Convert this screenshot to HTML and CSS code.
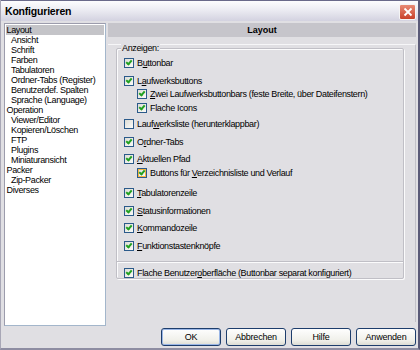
FILE: index.html
```html
<!DOCTYPE html>
<html>
<head>
<meta charset="utf-8">
<link rel="stylesheet" href="styles.css">
</head>
<body>
<div class="window">
  <div class="titlebar">
    <span class="title">Konfigurieren</span>
    <span class="close"><svg width="10" height="10" viewBox="0 0 10 10"><path d="M1.5 1.5 L8.5 8.5 M8.5 1.5 L1.5 8.5" stroke="#fff" stroke-width="1.8"/></svg></span>
  </div>
  <div class="main">
    <ul class="tree">
      <li class="sel">Layout</li>
      <li class="sub">Ansicht</li>
      <li class="sub">Schrift</li>
      <li class="sub">Farben</li>
      <li class="sub">Tabulatoren</li>
      <li class="sub">Ordner-Tabs (Register)</li>
      <li class="sub">Benutzerdef. Spalten</li>
      <li class="sub">Sprache (Language)</li>
      <li>Operation</li>
      <li class="sub">Viewer/Editor</li>
      <li class="sub">Kopieren/Löschen</li>
      <li class="sub">FTP</li>
      <li class="sub">Plugins</li>
      <li class="sub">Miniaturansicht</li>
      <li>Packer</li>
      <li class="sub">Zip-Packer</li>
      <li>Diverses</li>
    </ul>
    <div class="right">
      <div class="header">Layout</div>
      <div class="panel">
        <div class="group">
          <span class="legend">Anzeigen:</span>
          <div class="row r1"><span class="cb on"></span><span>B<u>u</u>ttonbar</span></div>
          <div class="row top"><span class="cb on"></span><span>L<u>a</u>ufwerksbuttons</span></div>
          <div class="row nest"><span class="cb on"></span><span><u>Z</u>wei Laufwerksbuttonbars (feste Breite, über Dateifenstern)</span></div>
          <div class="row nest"><span class="cb on"></span><span>Flache Icons</span></div>
          <div class="row top after"><span class="cb"></span><span>Lauf<u>w</u>erksliste (herunterklappbar)</span></div>
          <div class="row top"><span class="cb on"></span><span>O<u>r</u>dner-Tabs</span></div>
          <div class="row top"><span class="cb on"></span><span><u>A</u>ktuellen Pfad</span></div>
          <div class="row nest"><span class="cb on hover"></span><span>Buttons für <u>V</u>erzeichnisliste und Verlauf</span></div>
          <div class="row top after2"><span class="cb on"></span><span><u>T</u>abulatorenzeile</span></div>
          <div class="row top"><span class="cb on"></span><span><u>S</u>tatusinformationen</span></div>
          <div class="row top"><span class="cb on"></span><span><u>K</u>ommandozeile</span></div>
          <div class="row top"><span class="cb on"></span><span><u>F</u>unktionstastenknöpfe</span></div>
          <div class="sep"></div>
          <div class="row last"><span class="cb on"></span><span>Flache Benutzer<u>o</u>berfläche (Buttonbar separat konfiguriert)</span></div>
        </div>
      </div>
    </div>
  </div>
  <div class="buttons">
    <button class="btn def">OK</button>
    <button class="btn">Abbrechen</button>
    <button class="btn">Hilfe</button>
    <button class="btn">Anwenden</button>
  </div>
</div>
</body>
</html>
```
FILE: styles.css
```css
html, body {
  margin: 0;
  padding: 0;
  background: #e0dfe3;
}
body {
  font-family: "Liberation Sans", Arial, sans-serif;
  font-size: 9px;
  letter-spacing: -0.35px;
  color: #000;
}
.window {
  width: 420px;
  height: 350px;
  box-sizing: border-box;
  border-left: 1px solid #a8a7b6;
  border-right: 2px solid #5a5a78;
  border-bottom: 2px solid #8e8da2;
  background: #e0dfe3;
  display: flex;
  flex-direction: column;
}
.titlebar {
  height: 21px;
  flex: none;
  border-top: 1px solid #6a6a8a;
  box-sizing: border-box;
  background: linear-gradient(#fdfdfe 0%, #eeeef4 40%, #d3d2e0 100%);
  display: flex;
  align-items: center;
  justify-content: space-between;
  padding: 0 2px 0 4px;
}
.title {
  font-weight: bold;
  font-size: 10.5px;
  color: #000;
  letter-spacing: -0.2px;
}
.close {
  width: 15px;
  height: 14px;
  border: 1px solid #f4f4f4;
  border-radius: 2px;
  background: linear-gradient(#e88a74, #c9412a);
  display: flex;
  align-items: center;
  justify-content: center;
  margin-top: 1px;
}
.close svg { display: block; }
.main {
  display: flex;
  gap: 2px;
  padding: 2px 2px 0 3px;
  height: 303px;
  flex: none;
}
.tree {
  list-style: none;
  margin: 0;
  width: 102px;
  height: 303px;
  box-sizing: border-box;
  background: #fff;
  border: 1px solid #a3b6cb;
  border-top-color: #9c9cac;
  border-left-color: #9c9cac;
  padding: 1px 0 0 1px;
  flex: none;
}
.tree li {
  height: 10px;
  line-height: 10px;
  padding-left: 0.5px;
  white-space: nowrap;
}
.tree li.sub { padding-left: 5px; }
.tree li.sel { background: #c4c4c8; margin-right: 1px; }
.right {
  width: 309px;
  display: flex;
  flex-direction: column;
}
.header {
  height: 14px;
  line-height: 14px;
  background: #c6c5cb;
  text-align: center;
  font-weight: bold;
  font-size: 9px;
  letter-spacing: 0;
  flex: none;
}
.panel {
  margin-top: 7px;
  height: 278px;
  box-sizing: border-box;
  border-top: 1px solid #f6f6f8;
  border-right: 1px solid #c2c1c8;
  padding: 3px 11px 0 8px;
}
.group {
  position: relative;
  border: 1px solid #c0bfc6;
  box-shadow: inset 1px 1px 0 #fbfbfc, 1px 1px 0 #fbfbfc;
  border-radius: 2px;
  height: 231px;
  padding: 9px 0 0 7px;
  box-sizing: border-box;
}
.legend {
  position: absolute;
  left: 4px;
  top: -6px;
  background: #e0dfe3;
  padding: 0 1px;
  line-height: 10px;
}
.row {
  display: flex;
  align-items: center;
  gap: 3px;
  height: 10px;
  line-height: 10px;
  white-space: nowrap;
}
.row.top { margin-top: 7.5px; }
.row.nest { margin-top: 3.5px; padding-left: 13px; }
.row.after { margin-top: 6.5px; }
.row.after2 { margin-top: 10.5px; }
.row u { text-decoration: underline; text-underline-offset: 1px; }
.cb {
  width: 10px;
  height: 10px;
  box-sizing: border-box;
  border: 1px solid #2b5a8a;
  background: linear-gradient(135deg, #dcdcd6, #fbfbf9);
  flex: none;
  position: relative;
}
.cb.on::after {
  content: "";
  position: absolute;
  left: 2px;
  top: 0px;
  width: 2px;
  height: 4px;
  border: solid #21a121;
  border-width: 0 2px 2px 0;
  transform: rotate(40deg);
}
.cb.hover {
  box-shadow: inset 0 0 0 1px #f7b540;
}
.sep {
  margin: 10px 0 0 -7px;
  border-top: 1px solid #c0bfc6;
  border-bottom: 1px solid #fbfbfc;
}
.row.last { margin-top: 5px; }
.buttons {
  display: flex;
  justify-content: flex-end;
  gap: 5px;
  padding: 2px 2px 0 0;
}
.btn {
  width: 60px;
  height: 18px;
  padding: 0;
  font-family: "Liberation Sans", Arial, sans-serif;
  font-size: 9px;
  letter-spacing: -0.2px;
  color: #000;
  border: 1px solid #1d3d6c;
  border-radius: 3px;
  background: linear-gradient(#fefefe, #f0f0ea 70%, #dcdcd4);
}
.btn.def {
  box-shadow: inset 0 0 0 1px #9ab6e6;
}
```
